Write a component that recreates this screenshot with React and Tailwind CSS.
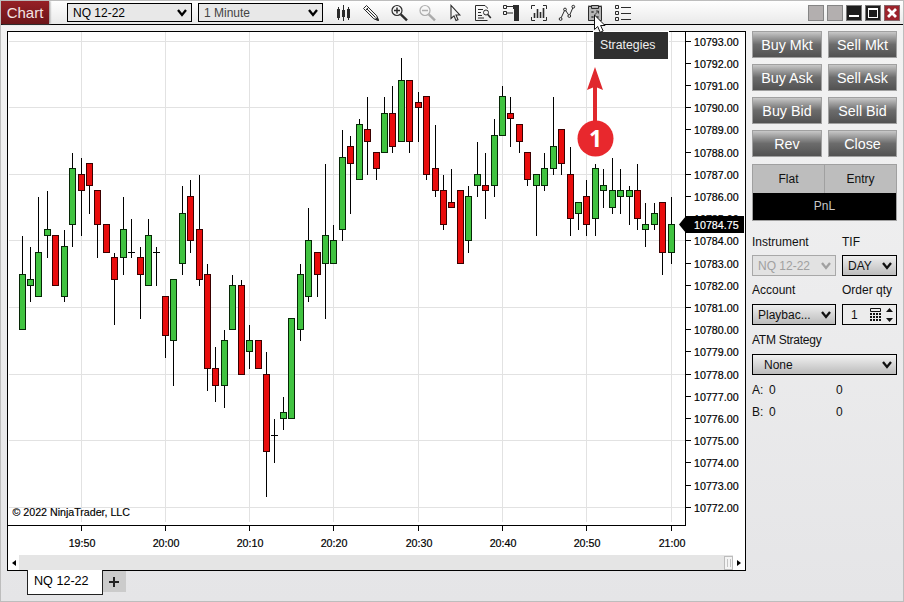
import React from "react";

// [color, high, top, bottom, low], one entry per minute from 19:43
const candles = [
  ["g", 236, 274, 330, 330], ["g", 247, 279, 286, 302], ["g", 197, 252, 297, 297],
  ["g", 191, 229, 236, 258], ["r", 235, 235, 286, 286], ["g", 230, 246, 297, 302],
  ["g", 153, 168, 225, 247], ["r", 158, 174, 191, 236], ["r", 163, 163, 186, 214],
  ["r", 190, 190, 225, 258], ["r", 224, 224, 253, 253], ["r", 253, 257, 280, 325],
  ["g", 197, 229, 258, 275], ["d", 219, 252, 253, 258], ["r", 247, 257, 275, 319],
  ["g", 219, 235, 286, 286], ["d", 247, 252, 253, 286], ["r", 296, 296, 336, 358],
  ["g", 279, 279, 341, 386], ["g", 186, 213, 264, 275], ["r", 180, 196, 241, 253],
  ["r", 175, 229, 280, 286], ["r", 264, 274, 369, 391], ["r", 347, 368, 386, 402],
  ["g", 330, 340, 386, 408], ["g", 275, 285, 330, 330], ["r", 280, 285, 375, 375],
  ["g", 325, 340, 352, 369], ["r", 340, 340, 369, 369], ["r", 352, 374, 452, 497],
  ["d", 419, 435, 436, 463], ["g", 397, 412, 419, 430], ["g", 318, 318, 419, 419],
  ["g", 264, 274, 330, 341], ["g", 208, 240, 297, 302], ["r", 252, 252, 275, 297],
  ["g", 164, 235, 264, 319], ["g", 225, 240, 264, 264], ["g", 130, 157, 230, 241],
  ["r", 136, 146, 164, 214], ["g", 119, 124, 180, 180], ["r", 97, 129, 142, 175],
  ["r", 152, 152, 169, 180], ["g", 97, 113, 153, 153], ["r", 86, 113, 147, 153],
  ["g", 58, 80, 142, 142], ["r", 80, 80, 142, 153], ["r", 92, 102, 108, 142],
  ["r", 96, 96, 175, 180], ["r", 125, 168, 191, 197], ["r", 175, 190, 225, 230],
  ["r", 169, 202, 208, 208], ["r", 190, 190, 264, 264], ["g", 186, 196, 241, 253],
  ["g", 142, 174, 186, 197], ["r", 153, 185, 191, 219], ["g", 119, 135, 186, 197],
  ["g", 86, 96, 136, 136], ["r", 97, 113, 119, 147], ["r", 124, 124, 142, 153],
  ["r", 152, 152, 180, 186], ["g", 174, 174, 186, 236], ["g", 153, 168, 186, 191],
  ["g", 97, 146, 169, 175], ["r", 129, 129, 164, 175], ["r", 147, 174, 219, 236],
  ["g", 202, 202, 214, 230], ["r", 180, 196, 225, 236], ["g", 164, 168, 219, 236],
  ["g", 169, 185, 191, 208], ["g", 158, 190, 208, 214], ["g", 169, 190, 197, 214],
  ["g", 186, 190, 197, 225], ["r", 164, 190, 219, 230], ["g", 203, 224, 230, 247],
  ["g", 203, 213, 225, 230], ["r", 202, 202, 253, 275], ["g", 197, 224, 253, 264],
];

const candleX = (i) => Math.floor(22 + i * 8.431);
const times = ["19:50", "20:00", "20:10", "20:20", "20:30", "20:40", "20:50", "21:00"];
const timeX = (i) => candleX(7 + i * 10);
const prices = Array.from({ length: 22 }, (_, k) => 10793 - k);
const priceY = (k) => Math.floor(41.2 + k * 22.19);

const Chart = () => (
  <svg
    width="737"
    height="523"
    viewBox="8 32 737 523"
    className="block"
    fontFamily="Liberation Sans, Arial, sans-serif"
    fontSize="10.7"
  >
    <g fill="#e2e2e2">
      {times.map((t, i) => (
        <rect key={t} x={timeX(i)} y="32" width="1" height="490" />
      ))}
      {prices.map((p, k) =>
        k % 3 === 0 ? <rect key={p} x="9" y={priceY(k)} width="676" height="1" /> : null
      )}
    </g>

    {candles.map(([color, high, top, bottom, low], i) => {
      const x = candleX(i);
      return (
        <g key={i}>
          <rect x={x} y={high} width="1" height={low - high} fill="#000" />
          {color === "d" ? (
            <rect x={x - 3} y={top} width="7" height="1" fill="#000" />
          ) : (
            <rect
              x={x - 2.5}
              y={top + 0.5}
              width="6"
              height={bottom - top - 1}
              fill={color === "g" ? "#40c340" : "#e90c0c"}
              stroke={color === "g" ? "#062806" : "#3a0000"}
            />
          )}
        </g>
      );
    })}

    <rect x="685" y="32" width="1" height="494" />
    <rect x="8" y="525" width="678" height="1" />
    {prices.map((p, k) => (
      <g key={p}>
        <rect x="686" y={priceY(k)} width="5" height="1" />
        <text x="694" y={priceY(k) + 5} stroke="#000" strokeWidth="0.2">{p}.00</text>
      </g>
    ))}
    {times.map((t, i) => (
      <g key={t}>
        <rect x={timeX(i)} y="526" width="1" height="5" />
        <text x={timeX(i) + 1} y="547" textAnchor="middle" stroke="#000" strokeWidth="0.2">{t}</text>
      </g>
    ))}
    <path d="M679 224.5L686 216H744V233H686Z" />
    <text x="694" y="229" fill="#fff" stroke="#fff" strokeWidth="0.2">10784.75</text>
    <text x="12.5" y="516" textLength="117.5" stroke="#000" strokeWidth="0.15">© 2022 NinjaTrader, LLC</text>
  </svg>
);

const Icon = ({ children, className = "" }) => (
  <svg
    width="16"
    height="19"
    viewBox="0 -1 16 19"
    fill="none"
    stroke="#2b2b2b"
    className={`overflow-visible ${className}`}
  >
    {children}
  </svg>
);

const Toolbar = () => (
  <div className="flex gap-3 ml-3">
    <Icon>
      <path d="M3.5 3V16M8.5 1V17M13.5 3V16" />
      <path d="M2 5h3v9H2zM7 6h3v7H7zM12 5h3v9h-3z" fill="#2b2b2b" stroke="none" />
    </Icon>
    <Icon>
      <path d="M0.5 4.5L3.5 1.5L13.8 11.8L15.5 16.5L10.8 14.8Z" />
      <path d="M2.5 6.5L5.5 3.5M3.8 4.8L12.5 13.5" />
      <path d="M14.3 13.5L15.5 16.5L12.5 15.3Z" fill="#2b2b2b" />
    </Icon>
    <Icon>
      <circle cx="6" cy="6.5" r="5" strokeWidth="1.2" />
      <path d="M3 6.5h6M6 3.5v6" strokeWidth="1.5" />
      <path d="M9.8 10.3L16 16.3" strokeWidth="2.4" />
    </Icon>
    <Icon className="opacity-35">
      <circle cx="6" cy="6.5" r="5" strokeWidth="1.2" />
      <path d="M3 6.5h6" strokeWidth="1.5" />
      <path d="M9.8 10.3L16 16.3" strokeWidth="2.4" />
    </Icon>
    <Icon>
      <path d="M4 1.5V14.5L7 11.8L9 16.5L11 15.6L9 11H12.8Z" strokeWidth="1.1" />
    </Icon>
    <Icon>
      <path d="M12.5 4.5V4L10 1.5H0.5V16.5H12.5M3 5.5h5M3 8.5h3M3 11.5h4M3 14h6" />
      <circle cx="11" cy="8.5" r="2.5" />
      <path d="M12.8 10.5L15.8 14" strokeWidth="1.6" />
    </Icon>
    <Icon>
      <path d="M0.5 1.5h3v3h-3zM0.5 7.5h3v3h-3zM4 2.5h6M4 9h6" />
      <path d="M10 1h6v16h-5V5h-1z" fill="#2b2b2b" stroke="none" />
    </Icon>
    <Icon>
      <path d="M4 1.5H0.5V5M12 1.5H15.5V5M0.5 13V16.5H4M15.5 13V16.5H12" />
      <path d="M3.5 9v5M6.5 5v9M9.5 8v6M12.5 4v10" strokeWidth="1.6" />
    </Icon>
    <Icon>
      <path d="M1.8 14.5L6 5.5L10.3 12L14.3 2.7" />
      <g fill="#eee">
        <circle cx="1.6" cy="15" r="1.4" />
        <circle cx="6" cy="5.5" r="1.4" />
        <circle cx="10.3" cy="12" r="1.4" />
        <circle cx="14.3" cy="2.7" r="1.4" />
      </g>
    </Icon>
    <Icon>
      <rect x="1" y="1" width="14" height="16" fill="#b5b5b5" stroke="none" />
      <path d="M4 2.5H1.5V16.5H14.5V2.5H12M4.5 1.5h7v3h-7z" />
      <path d="M4.5 7l2 2M6.5 7l-2 2M4.5 12l2 2M6.5 12l-2 2M7.5 11l4-4M9 7H11.5V9.5M9.5 12l2 2M11.5 12l-2 2" strokeWidth="0.9" />
    </Icon>
    <Icon>
      <path d="M0.5 1.5h3v3h-3zM0.5 7.5h3v3h-3zM0.5 13.5h3v3h-3zM6 3.5h10M6 9.5h10M6 15.5h10" />
    </Icon>
  </div>
);

const Arrow = () => (
  <svg width="10" height="8" viewBox="0 0 10 8" fill="none" stroke="currentColor" strokeWidth="2.3" className="shrink-0">
    <path d="M1 1L5 6L9 1" />
  </svg>
);

const Select = ({ children, className = "" }) => (
  <div className={`flex items-center justify-between border pr-1 ${className}`}>
    <span className="whitespace-pre">{children}</span>
    <Arrow />
  </div>
);

const orders = ["Buy Mkt", "Sell Mkt", "Buy Ask", "Sell Ask", "Buy Bid", "Sell Bid", "Rev", "Close"];

const OrderPanel = () => (
  <div className="w-[145px] ml-1.5 text-[12px] leading-[14px] text-[#111]">
    <div className="grid grid-cols-[70px_69px] gap-1.5">
      {orders.map((label) => (
        <button
          key={label}
          className="h-[27px] border border-[#a0a0a0] bg-linear-to-b from-[#c8c8c8] via-[#6c6c6c] via-50% to-[#525252] pt-0.5 text-[14.3px] leading-none text-white"
        >
          {label}
        </button>
      ))}
    </div>

    <div className="mt-[7px] h-[57px] border border-[#a0a0a0] bg-[#bdbdbd]">
      <div className="flex h-[28px] text-center leading-[28px]">
        <div className="w-[72px] border-r border-[#a0a0a0]">Flat</div>
        <div className="flex-1">Entry</div>
      </div>
      <div className="h-[27px] bg-black text-center leading-[27px] text-[#c8c8c8]">PnL</div>
    </div>

    <div className="mt-[14px] grid grid-cols-[84px_55px] gap-x-1.5">
      <div className="h-5">Instrument</div>
      <div className="h-5">TIF</div>
      <Select className="h-[21px] border-[#a8a8a8] pl-[5px] text-[#a0a0a0] bg-[#e2e2e2]">NQ 12-22</Select>
      <Select className="h-[21px] border-black pl-[5px] bg-linear-to-b from-[#eeeeee] to-[#bcbcbc]">DAY</Select>
      <div className="h-[28px] pt-[7px]">Account</div>
      <div className="h-[28px] pt-[7px] whitespace-nowrap">Order qty</div>
      <Select className="h-[21px] border-black pl-[5px] bg-linear-to-b from-[#eeeeee] to-[#bcbcbc]">Playbac...</Select>
      <div className="flex h-[21px] items-center border border-black bg-[#ececec] pl-2">
        <span className="w-[19px]">1</span>
        <svg width="24" height="14" viewBox="0 0 24 14" className="shrink-0">
          <path d="M.5 .5h10v3H.5z" fill="none" stroke="#111" />
          <path d="M0 5h2v2H0zM3 5h2v2H3zM6 5h2v2H6zM9 5h2v2H9zM0 8h2v2H0zM3 8h2v2H3zM6 8h2v2H6zM9 8h2v2H9zM0 11h2v2H0zM3 11h2v2H3zM6 11h2v2H6zM9 11h2v2H9z" fill="#111" />
          <path d="M16 4L19.5 0L23 4ZM16 10L19.5 14L23 10Z" fill="#111" />
        </svg>
      </div>
    </div>

    <div className="mt-2 h-[21px] tracking-[-0.25px]">ATM Strategy</div>
    <Select className="h-[21px] border-black pl-[11px] bg-linear-to-b from-[#f2f2f2] to-[#bcbcbc]">None</Select>
    <div className="mt-2 grid grid-cols-[17px_67px_auto] gap-y-2">
      <span>A:</span><span>0</span><span>0</span>
      <span>B:</span><span>0</span><span>0</span>
    </div>
  </div>
);

const WindowButtons = () => (
  <div className="ml-auto mr-[3px] flex gap-[3px]">
    <div className="size-4 border border-[#858585] bg-[#b3afaf]" />
    <div className="size-4 border border-[#858585] bg-[#b3afaf]" />
    <div className="flex size-4 items-end justify-center border border-[#777] bg-[#1c1c1c] pb-[3px]">
      <div className="h-0.5 w-2.5 bg-white" />
    </div>
    <div className="flex size-4 items-center justify-center border border-[#777] bg-[#1c1c1c]">
      <div className="h-2.5 w-2.5 border border-t-2 border-white" />
    </div>
    <div className="flex size-4 items-center justify-center border border-[#86666a] bg-[#9c222b]">
      <svg width="10" height="10" viewBox="0 0 10 10" stroke="#fff" strokeWidth="2.8">
        <path d="M1 1L9 9M9 1L1 9" />
      </svg>
    </div>
  </div>
);

const App = () => {
  return (
    <div className="relative h-[602px] w-[904px] overflow-hidden border border-[#bdbdbd] bg-linear-to-b from-[#f3f3f3] to-[#e5e5e7] font-['Liberation_Sans',Arial,sans-serif] text-[12px]">
      <div className="flex h-6 items-center border-b border-black bg-linear-to-b from-white to-[#e9e9e9]">
        <div className="h-[23px] w-12 bg-linear-to-b from-[#962026] to-[#6c1519] text-center text-[15px] leading-6 text-[#f4e4e4] shadow-[1px_0_2px_#888]">
          Chart
        </div>
        <Select className="ml-[18px] h-[19px] w-[125px] border-black bg-[#e8e8e8] pl-[5px] text-black">NQ 12-22</Select>
        <Select className="ml-1.5 h-[19px] w-[125px] border-black bg-[#e8e8e8] pl-[5px] text-black">
          <span className="text-[#444]">1 Minute</span>
        </Select>
        <Toolbar />
        <WindowButtons />
      </div>

      <div className="flex pl-1.5 pt-1.5">
        <div className="h-[540px] w-[739px] border border-black bg-white">
          <Chart />
          <div className="flex h-[15px] items-center bg-[#e5e5e5]">
            <div className="flex h-full w-[11px] items-center justify-center bg-white">
              <svg width="4" height="6" viewBox="0 0 4 6"><path d="M4 0V6L0 3Z" /></svg>
            </div>
            <div className="ml-auto flex h-[14px] w-[9px] items-center justify-center gap-0.5 border border-[#bcbcbc] bg-[#f4f4f4]">
              <div className="h-2 w-px bg-[#c4c4c4]" />
              <div className="h-2 w-px bg-[#c4c4c4]" />
            </div>
            <div className="flex h-full w-3 items-center justify-center bg-white">
              <svg width="4" height="6" viewBox="0 0 4 6"><path d="M0 0V6L4 3Z" /></svg>
            </div>
          </div>
        </div>
        <OrderPanel />
      </div>

      <div className="relative -mt-px flex pl-[26px]">
        <div className="h-[25px] w-[76px] border border-t-0 border-[#222] bg-white pl-1.5 text-[12.6px] leading-[23px] text-black">
          NQ 12-22
        </div>
        <div className="mt-px flex h-[21px] w-[23px] items-center bg-[#cbcbcb] pl-1.5">
          <svg width="10" height="10" viewBox="0 0 10 10" stroke="#222" strokeWidth="2">
            <path d="M5 0V10M0 5H10" />
          </svg>
        </div>
      </div>

      <div className="absolute left-[593px] top-[31px] h-[27px] w-[74px] bg-[#2f2f2f] pl-1.5 text-[12.3px] leading-[27px] text-[#eee] shadow-[0_0_0_1px_#fff]">
        Strategies
      </div>
      <svg className="absolute left-[592px] top-[13px]" width="14" height="20" viewBox="0 0 14 20">
        <path d="M1.5 1V15.5L4.7 12.5L7.2 18.3L10.2 17L7.6 11.5H12Z" fill="#fff" stroke="#111" />
      </svg>
      <svg className="absolute left-[575px] top-[65px]" width="38" height="92" viewBox="0 0 38 92">
        <path d="M19 1L27 24L21 21.5V60H17V21.5L11 24Z" fill="#e0282d" />
        <circle cx="19.5" cy="72.5" r="18" fill="#e8282d" />
        <text x="19.5" y="81" textAnchor="middle" fill="#fff" fontSize="23" fontWeight="700" fontFamily="Open Sans, sans-serif">1</text>
      </svg>
    </div>
  );
};

export default App;
